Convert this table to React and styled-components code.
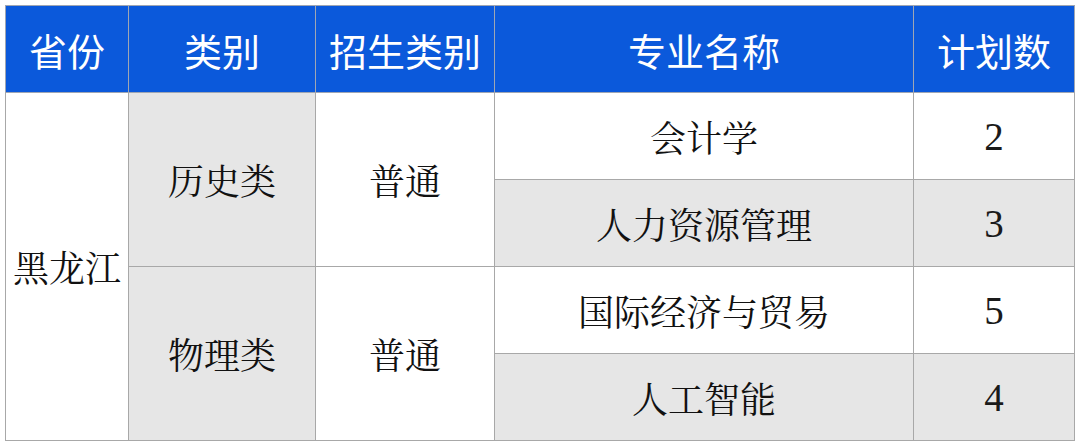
import React from 'react';
import styled, { createGlobalStyle } from 'styled-components';

const GlobalStyle = createGlobalStyle`
  html, body {
    margin: 0;
    padding: 0;
    background: #ffffff;
  }
`;

const Page = styled.div`
  padding: 5px 6px 0 5px;
  width: 1080px;
  height: 445px;
  box-sizing: border-box;
`;

const Table = styled.table`
  border-collapse: collapse;
  table-layout: fixed;
  width: 1069px;
`;

const HeadCell = styled.th`
  background-color: #0b59db;
  color: #ffffff;
  height: 86px;
  padding: 0;
  border: 1px solid #9fa6b3;
  font-family: "Noto Sans CJK SC", sans-serif;
  font-weight: 400;
  font-size: 38px;
  text-align: center;
  vertical-align: middle;
`;

const Cell = styled.td`
  background-color: ${(p) => (p.$shade ? '#e6e6e6' : '#ffffff')};
  color: #111111;
  height: 86px;
  padding: 0;
  border: 1px solid #a8a8a8;
  font-family: "Noto Serif CJK SC", "Noto Sans CJK SC", serif;
  font-size: 36px;
  text-align: center;
  vertical-align: middle;
  white-space: nowrap;
`;

const NumberCell = styled(Cell)`
  font-family: "Liberation Serif", "Times New Roman", serif;
  font-size: 39px;
  color: #1a1a1a;
`;

const columns = [
  { title: '省份', width: 123 },
  { title: '类别', width: 187 },
  { title: '招生类别', width: 179 },
  { title: '专业名称', width: 419 },
  { title: '计划数', width: 161 },
];

const groups = [
  {
    type: '历史类',
    kind: '普通',
    majors: [
      { name: '会计学', count: 2 },
      { name: '人力资源管理', count: 3 },
    ],
  },
  {
    type: '物理类',
    kind: '普通',
    majors: [
      { name: '国际经济与贸易', count: 5 },
      { name: '人工智能', count: 4 },
    ],
  },
];

const totalRows = groups.reduce((n, g) => n + g.majors.length, 0);

export default function App() {
  return (
    <Page>
      <GlobalStyle />
      <Table>
        <colgroup>
          {columns.map((c) => (
            <col key={c.title} style={{ width: c.width }} />
          ))}
        </colgroup>
        <thead>
          <tr>
            {columns.map((c) => (
              <HeadCell key={c.title}>{c.title}</HeadCell>
            ))}
          </tr>
        </thead>
        <tbody>
          {groups.map((g, gi) =>
            g.majors.map((m, mi) => (
              <tr key={m.name}>
                {gi === 0 && mi === 0 && <Cell rowSpan={totalRows}>黑龙江</Cell>}
                {mi === 0 && (
                  <>
                    <Cell rowSpan={g.majors.length} $shade>
                      {g.type}
                    </Cell>
                    <Cell rowSpan={g.majors.length}>{g.kind}</Cell>
                  </>
                )}
                <Cell $shade={mi % 2 === 1}>{m.name}</Cell>
                <NumberCell $shade={mi % 2 === 1}>{m.count}</NumberCell>
              </tr>
            ))
          )}
        </tbody>
      </Table>
    </Page>
  );
}
